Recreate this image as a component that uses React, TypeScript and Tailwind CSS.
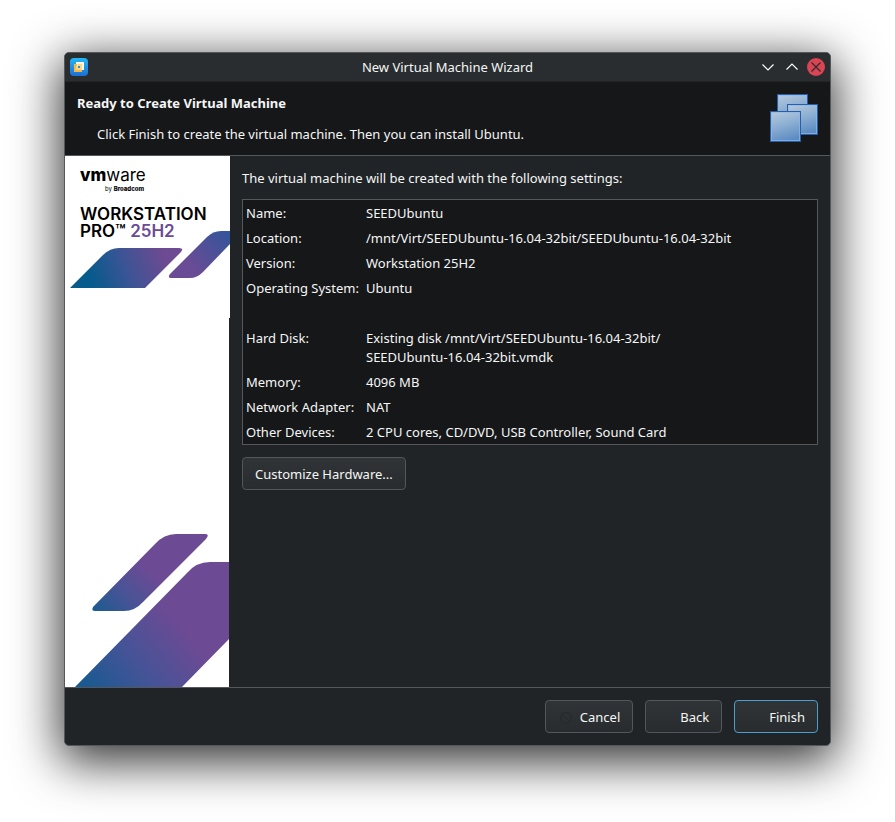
import type { ReactNode } from 'react';
import { clsx } from 'clsx';

const SETTINGS = [
  { label: 'Name:', value: 'SEEDUbuntu' },
  {
    label: 'Location:',
    value: '/mnt/Virt/SEEDUbuntu-16.04-32bit/SEEDUbuntu-16.04-32bit',
  },
  { label: 'Version:', value: 'Workstation 25H2' },
  { label: 'Operating System:', value: 'Ubuntu' },
  { label: '', value: '' },
  {
    label: 'Hard Disk:',
    value: 'Existing disk /mnt/Virt/SEEDUbuntu-16.04-32bit/\nSEEDUbuntu-16.04-32bit.vmdk',
  },
  { label: 'Memory:', value: '4096 MB' },
  { label: 'Network Adapter:', value: 'NAT' },
  {
    label: 'Other Devices:',
    value: '2 CPU cores, CD/DVD, USB Controller, Sound Card',
  },
];

interface ButtonProps {
  children: ReactNode;
  icon?: ReactNode;
  primary?: boolean;
}

function Button({ children, icon, primary }: ButtonProps) {
  return (
    <button
      type="button"
      className={clsx(
        'flex h-[33px] items-center gap-[6px] rounded-[4px] border bg-linear-to-b from-[#303437] to-[#282c2f] px-3 pt-[2px]',
        primary ? 'border-[#4a9fd0]' : 'border-[#53575a]'
      )}
    >
      {icon}
      <span>{children}</span>
    </button>
  );
}

function AppIcon() {
  return (
    <svg width="18" height="18" viewBox="0 0 18 18" aria-hidden="true">
      <defs>
        <linearGradient id="app-bg" x1="0" y1="0" x2="0" y2="1">
          <stop offset="0" stopColor="#22b8f5" />
          <stop offset="1" stopColor="#1b6fd8" />
        </linearGradient>
      </defs>
      <rect width="18" height="18" rx="4" fill="url(#app-bg)" />
      <rect x="7" y="5" width="6" height="6" fill="none" stroke="#fff6dc" strokeWidth="2" />
      <path d="M7 7H5v6h6v-2" fill="none" stroke="#f9b642" strokeWidth="2" />
      <path d="M7 8v3h4V7H8" fill="none" stroke="#fbd888" strokeWidth="2" />
    </svg>
  );
}

function MachinesIcon() {
  return (
    <svg width="48" height="48" viewBox="0 0 48 48" className="shrink-0" aria-hidden="true">
      <defs>
        <linearGradient id="pane" x1="0.2" y1="0" x2="0.5" y2="1">
          <stop offset="0" stopColor="#b4c8dc" />
          <stop offset="0.5" stopColor="#8aadd2" />
          <stop offset="1" stopColor="#5d8cc2" />
        </linearGradient>
      </defs>
      {[
        [7, 0],
        [17, 10],
        [0, 17],
      ].map(([x, y]) => (
        <g key={x}>
          <rect x={x + 0.5} y={y + 0.5} width="30" height="30" fill="url(#pane)" stroke="#2a5fa8" />
          <rect x={x + 1.5} y={y + 1.5} width="28" height="28" fill="none" stroke="#8db8ea" strokeOpacity="0.7" />
        </g>
      ))}
    </svg>
  );
}

function Sidebar() {
  return (
    <aside className="flex w-[165px] shrink-0 flex-col">
      {/* Product banner */}
      <div className="relative h-[162px] bg-white px-[15px] pt-[10px] font-['Inter',sans-serif] text-black">
        <svg className="absolute top-0 left-0" width="165" height="162" viewBox="0 0 165 162" aria-hidden="true">
          <defs>
            <linearGradient id="band-a" gradientUnits="userSpaceOnUse" x1="25" y1="125" x2="98" y2="98">
              <stop offset="0" stopColor="#045b8c" />
              <stop offset="0.5" stopColor="#3c5495" />
              <stop offset="1" stopColor="#6d4a92" />
            </linearGradient>
            <linearGradient id="band-b" gradientUnits="userSpaceOnUse" x1="125" y1="110" x2="165" y2="75">
              <stop offset="0" stopColor="#6a4b95" />
              <stop offset="1" stopColor="#31559a" />
            </linearGradient>
          </defs>
          <path d="M5 132L38 99Q45 92 54 92H114Q119 92 116 96L80 132Z" fill="url(#band-a)" />
          <path d="M165 75H156Q148 75 142 81L105 118Q102 122 107 122H125Q132 122 138 116L165 88Z" fill="url(#band-b)" />
        </svg>
        <div className="relative w-[64px] text-right">
          <p className="text-left text-[17px] leading-[19px]">
            <b className="font-extrabold">vm</b>ware
          </p>
          <p className="text-[6px] leading-[7px]">
            by <b className="font-extrabold">Broadcom</b>
          </p>
        </div>
        <h2 className="relative pt-[14px] text-[17px] leading-[17px] font-semibold whitespace-nowrap">
          WORKSTATION
          <br />
          PRO™ <span className="text-[#6a4b95]">25H2</span>
        </h2>
      </div>
      <div className="flex w-[164px] flex-1 items-end bg-white">
        <svg width="164" height="160" viewBox="0 0 164 160" aria-hidden="true">
          <defs>
            <linearGradient id="band-c" gradientUnits="userSpaceOnUse" x1="35" y1="90" x2="85" y2="42">
              <stop offset="0" stopColor="#1c5b90" />
              <stop offset="0.5" stopColor="#4a5396" />
              <stop offset="1" stopColor="#6d4a94" />
            </linearGradient>
            <linearGradient id="band-d" gradientUnits="userSpaceOnUse" x1="22" y1="160" x2="110" y2="90">
              <stop offset="0" stopColor="#1a5a91" />
              <stop offset="0.5" stopColor="#475397" />
              <stop offset="1" stopColor="#6d4a94" />
            </linearGradient>
          </defs>
          <path d="M28 80L90 17Q99 7 111 7H140Q145 7 141 12L78 75Q70 84 59 84H30Q26 84 28 80Z" fill="url(#band-c)" />
          <path d="M10 160L122 46Q131 35 145 35H164V112L117 160Z" fill="url(#band-d)" />
        </svg>
      </div>
    </aside>
  );
}

function App() {
  return (
    <div className="flex min-h-screen flex-col bg-white px-16 pt-[52px] pb-[76px] font-['Noto_Sans',sans-serif] text-[13px] leading-[19px] text-[#f5f6f6]">
      <div className="flex flex-1 flex-col overflow-hidden rounded-[5px] border border-[#55585a] bg-[#202426] shadow-[0_12px_48px_4px_rgba(0,0,0,0.8)]">
        {/* Title bar */}
        <div className="grid h-[29px] grid-cols-[1fr_auto_1fr] items-center border-b border-[#202426] bg-[#292d30] px-[5px]">
          <AppIcon />
          <h1>New Virtual Machine Wizard</h1>
          <div className="flex items-center justify-end gap-[6px]">
            <button type="button" aria-label="Minimize">
              <svg width="18" height="18" viewBox="0 0 18 18" fill="none" stroke="#fcfcfc" strokeWidth="1.2">
                <path d="M3.5 6.5L9 12l5.5-5.5" />
              </svg>
            </button>
            <button type="button" aria-label="Maximize">
              <svg width="18" height="18" viewBox="0 0 18 18" fill="none" stroke="#fcfcfc" strokeWidth="1.2">
                <path d="M3.5 11.5L9 6l5.5 5.5" />
              </svg>
            </button>
            <button type="button" aria-label="Close">
              <svg width="18" height="18" viewBox="0 0 18 18" fill="none" stroke="#292d30" strokeWidth="1.2">
                <circle cx="9" cy="9" r="9" fill="#da4453" stroke="none" />
                <path d="M4.5 4.5l9 9M13.5 4.5l-9 9" />
              </svg>
            </button>
          </div>
        </div>

        {/* Page heading */}
        <header className="flex items-start justify-between border-b border-[#55585a] bg-[#151719] px-3 pt-3 pb-[11px]">
          <div>
            <h2 className="font-bold">Ready to Create Virtual Machine</h2>
            <p className="pt-3 pl-5">
              Click Finish to create the virtual machine. Then you can install Ubuntu.
            </p>
          </div>
          <MachinesIcon />
        </header>

        <div className="flex flex-1">
          <Sidebar />
          <main className="flex flex-1 flex-col items-start px-3 pt-[13px]">
            <p>The virtual machine will be created with the following settings:</p>
            <div className="mt-[11px] mb-3 w-full border border-[#55585a] bg-[#151719]">
              <table className="w-full">
                <tbody>
                  {SETTINGS.map(({ label, value }, idx) => (
                    <tr key={idx} className="h-[25px] align-top">
                      <th scope="row" className="w-[123px] pt-[4px] pb-[2px] pl-[3px] text-left font-normal whitespace-nowrap">
                        {label}
                      </th>
                      <td className="pt-[4px] pb-[2px] whitespace-pre-line">{value}</td>
                    </tr>
                  ))}
                </tbody>
              </table>
            </div>
            <Button>Customize Hardware...</Button>
          </main>
        </div>

        <footer className="flex justify-end gap-3 border-t border-[#55585a] p-3">
          <Button
            icon={
              <svg width="16" height="16" viewBox="0 0 16 16" fill="none" stroke="#25292b" aria-hidden="true">
                <circle cx="8" cy="8" r="5.5" />
                <path d="M4 4l8 8" />
              </svg>
            }
          >
            Cancel
          </Button>
          <Button icon={<span className="w-4" />}>Back</Button>
          <Button primary icon={<span className="w-4" />}>
            Finish
          </Button>
        </footer>
      </div>
    </div>
  );
}

export default App;
